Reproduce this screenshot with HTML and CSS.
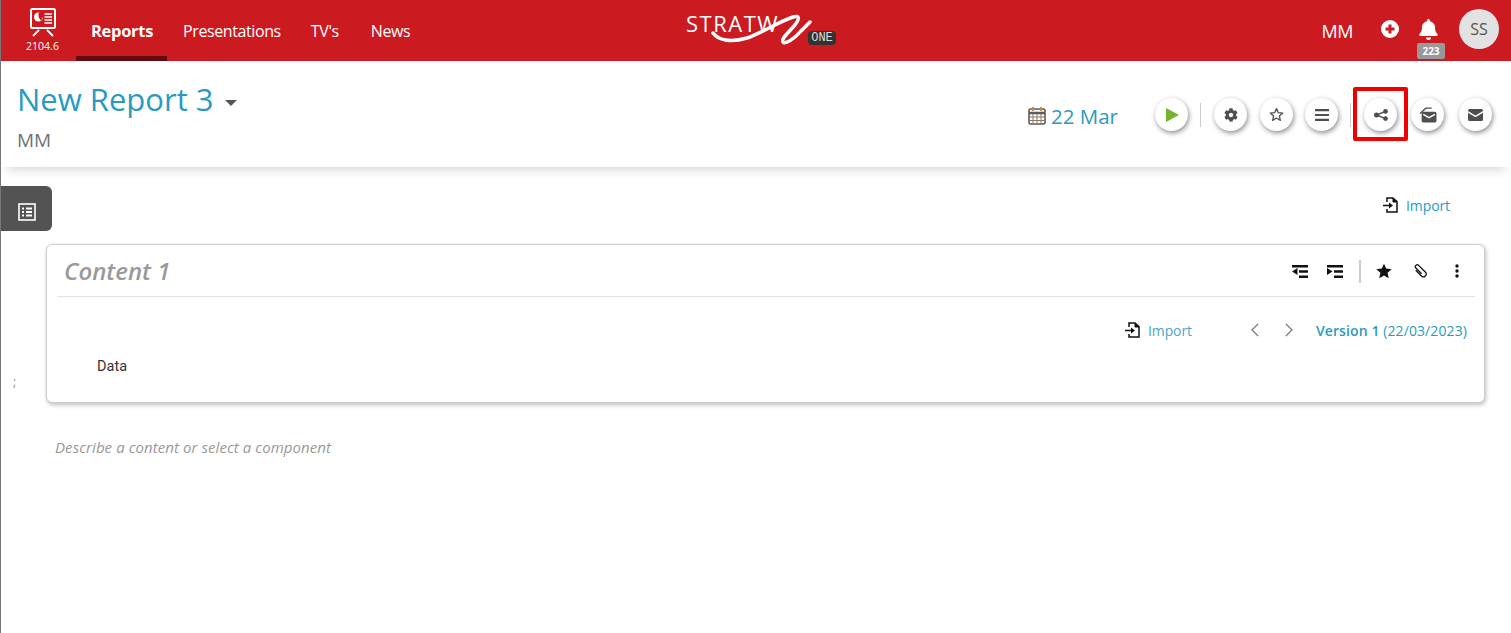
FILE: index.html
```html
<!DOCTYPE html>
<html lang="en">
<head>
    <meta charset="UTF-8">
    <meta name="viewport" content="width=device-width, initial-scale=1.0">
    <title>New Report 3</title>
    <link rel="stylesheet" href="styles.css">
</head>
<body>
    <nav class="topbar">
        <div class="app-mark">
            <svg class="app-icon" viewBox="0 0 26 29" width="26" height="29">
                <rect x="1" y="1" width="24" height="19" rx="1.5" fill="none" stroke="#fff" stroke-width="2"/>
                <circle cx="8.5" cy="9" r="4.5" fill="#fff"/>
                <path d="M8.5 9V4.5H13V9ZM8.5 9H13L11 13Z" fill="#cb1a20"/>
                <path d="M14.5 6H22M14.500 9H22M14.500 12H22M14.500 15H22" stroke="#fff" stroke-width="1.600"/>
                <path d="M9 22L3 28M17 22L23 28" stroke="#fff" stroke-width="1.800" fill="none"/>
            </svg>
            <span class="app-version">2104.6</span>
        </div>
        <div class="nav-links">
            <a class="nav-link active" href="#">Reports</a>
            <a class="nav-link" href="#">Presentations</a>
            <a class="nav-link" href="#">TV's</a>
            <a class="nav-link" href="#">News</a>
        </div>
        <div class="brand">
            <span class="brand-name">STRATW</span>
            <svg class="brand-swoosh" viewBox="0 0 104 36" width="104" height="36">
                <path d="M3 21C8 28 20 31 37 26C50 22 70 9 83 5C90 3 90 7 84 14C78 21 71 27 73 30C75 33 85 26 90 20C94 16 97 13 100 10" fill="none" stroke="#fff" stroke-width="3.500" stroke-linecap="round"/>
            </svg>
            <span class="brand-badge">ONE</span>
        </div>
        <div class="topbar-right">
            <span class="user-code">MM</span>
            <svg class="plus-icon" viewBox="0 0 18 18" width="18" height="18">
                <circle cx="9" cy="9" r="9" fill="#fff"/>
                <path d="M9 4.500V13.500M4.500 9H13.500" stroke="#cb1a20" stroke-width="3"/>
            </svg>
            <div class="bell-wrap">
                <svg viewBox="0 0 448 512" width="19" height="21">
                    <path fill="#fff" d="M224 512c35.32 0 63.97-28.65 63.97-64H160.03c0 35.35 28.65 64 63.97 64zm215.39-149.71c-19.32-20.76-55.47-51.99-55.47-154.29 0-77.7-54.48-139.9-127.94-155.16V32c0-17.67-14.32-32-31.98-32s-31.98 14.33-31.98 32v20.84C118.56 68.1 64.08 130.3 64.08 208c0 102.3-36.15 133.53-55.47 154.29-6 6.45-8.66 14.16-8.61 21.71.11 16.4 12.98 32 32.1 32h383.8c19.12 0 32-15.6 32.1-32 .05-7.55-2.61-15.27-8.61-21.71z"/>
                </svg>
                <span class="bell-count">223</span>
            </div>
            <div class="avatar">SS</div>
        </div>
    </nav>

    <header class="report-head">
        <div class="report-info">
            <h1 class="report-title">New Report 3 <span class="caret"></span></h1>
            <div class="report-owner">MM</div>
        </div>
        <div class="report-tools">
            <div class="report-date">
                <svg viewBox="0 0 18 19" width="18" height="19">
                    <rect x="1" y="3" width="16" height="15" rx="1.500" fill="#fff" stroke="#5f5a55" stroke-width="1.600"/>
                    <path d="M1 7H17" stroke="#5f5a55" stroke-width="2.500"/>
                    <path d="M5 8V17M9 8V17M13 8V17M2 11H16M2 14.500H16" stroke="#8a7660" stroke-width="1"/>
                    <path d="M5 1V5M13 1V5" stroke="#c98b4a" stroke-width="2"/>
                </svg>
                <span>22 Mar</span>
            </div>
            <button class="round-btn play-btn">
                <svg viewBox="0 0 13 14" width="13" height="14"><path d="M0 0L13 7L0 14Z" fill="#72b52c"/></svg>
            </button>
            <span class="tool-sep"></span>
            <button class="round-btn">
                <svg viewBox="0 0 512 512" width="14" height="14"><path fill="#4f4f4f" d="M487.4 315.7l-42.6-24.6c4.3-23.2 4.3-47 0-70.2l42.6-24.6c4.9-2.8 7.1-8.6 5.5-14-11.1-35.6-30-67.8-54.7-94.6-3.8-4.1-10-5.1-14.8-2.3L380.8 110c-17.9-15.400-38.500-27.300-60.800-35.100V25.800c0-5.600-3.900-10.500-9.400-11.700-36.700-8.200-74.300-7.800-109.200 0-5.500 1.200-9.400 6.100-9.400 11.700V75c-22.200 7.900-42.800 19.800-60.800 35.100L88.700 85.500c-4.900-2.800-11-1.900-14.800 2.300-24.700 26.700-43.600 58.900-54.700 94.600-1.700 5.400.6 11.200 5.500 14L67.300 221c-4.300 23.200-4.300 47 0 70.200l-42.600 24.600c-4.900 2.800-7.100 8.600-5.500 14 11.100 35.600 30 67.800 54.700 94.600 3.800 4.100 10 5.100 14.800 2.300l42.600-24.600c17.900 15.400 38.500 27.300 60.800 35.100v49.200c0 5.600 3.900 10.500 9.400 11.700 36.700 8.200 74.300 7.800 109.200 0 5.500-1.200 9.400-6.100 9.400-11.700v-49.200c22.200-7.900 42.800-19.800 60.800-35.100l42.600 24.600c4.900 2.800 11 1.900 14.800-2.300 24.700-26.700 43.600-58.900 54.700-94.600 1.500-5.500-.7-11.300-5.600-14.100zM256 336c-44.100 0-80-35.900-80-80s35.900-80 80-80 80 35.900 80 80-35.900 80-80 80z"/></svg>
            </button>
            <button class="round-btn">
                <svg viewBox="0 0 24 24" width="15" height="15"><path d="M12 2.500L14.900 9L22 9.700L16.600 14.400L18.200 21.400L12 17.700L5.800 21.400L7.400 14.400L2 9.700L9.100 9Z" fill="none" stroke="#4f4f4f" stroke-width="2" stroke-linejoin="round"/></svg>
            </button>
            <button class="round-btn tight">
                <svg viewBox="0 0 14 12" width="14" height="12"><path d="M0 1.200H14M0 6H14M0 10.800H14" stroke="#4f4f4f" stroke-width="2.200"/></svg>
            </button>
            <span class="tool-sep"></span>
            <button class="round-btn marked">
                <svg viewBox="0 0 14 12" width="14" height="12">
                    <circle cx="2.500" cy="6" r="2.500" fill="#4f4f4f"/><circle cx="11.500" cy="2.400" r="2.400" fill="#4f4f4f"/><circle cx="11.500" cy="9.600" r="2.400" fill="#4f4f4f"/>
                    <path d="M2.500 6L11.500 2.400M2.500 6L11.500 9.600" stroke="#4f4f4f" stroke-width="1.500"/>
                </svg>
            </button>
            <button class="round-btn wide">
                <svg viewBox="0 0 17 15" width="18" height="16">
                    <path d="M1 6L6.500 1H12" fill="none" stroke="#4f4f4f" stroke-width="1.300"/>
                    <rect x="2.500" y="4.500" width="14" height="10" rx="1.500" fill="#4f4f4f"/>
                    <path d="M4 7L9.500 10L15 7" fill="none" stroke="#fff" stroke-width="1.300"/>
                </svg>
            </button>
            <button class="round-btn wider">
                <svg viewBox="0 0 15 12" width="15" height="12">
                    <path fill="#4f4f4f" d="M1.500 0H13.500A1.500 1.500 0 0 1 15 1.500V2L7.500 6.500L0 2V1.500A1.500 1.500 0 0 1 1.500 0ZM0 3.800L7.500 8.300L15 3.800V10.500A1.500 1.500 0 0 1 13.500 12H1.500A1.500 1.500 0 0 1 0 10.500Z"/>
                </svg>
            </button>
        </div>
    </header>

    <div class="page-body">
        <aside class="side-col">
            <div class="side-tab">
                <svg viewBox="0 0 18 18" width="18" height="18">
                    <rect x="1" y="1" width="16" height="16" fill="none" stroke="#fff" stroke-width="1.600"/>
                    <path d="M4 5.500H6M8 5.500H14M4 9H6M8 9H14M4 12.500H6M8 12.500H14" stroke="#fff" stroke-width="1.800"/>
                </svg>
            </div>
            <span class="side-mark">;</span>
        </aside>
        <main class="main-col">
            <div class="import-row">
                <a class="import-link" href="#">
                    <svg viewBox="0 0 15 16" width="15" height="16">
                        <path d="M4 5V1H10L14 4.500V15H4V12" fill="none" stroke="#111" stroke-width="1.500"/>
                        <path d="M10 1V5H14" fill="#111" stroke="#111"/>
                        <path d="M0 8.500H7" stroke="#111" stroke-width="1.500"/>
                        <path d="M6 5.500L10 8.500L6 11.500Z" fill="#111"/>
                    </svg>
                    <span>Import</span>
                </a>
            </div>
            <section class="card">
                <div class="card-head">
                    <h2 class="card-title">Content 1</h2>
                    <div class="card-tools">
                        <svg class="tool-outdent" viewBox="0 0 16 13" width="16" height="13"><path d="M0 1.200H16M7 6.500H16M7 11.800H16" stroke="#111" stroke-width="2.400"/><path d="M5.500 3L0 6.500L5.500 10Z" fill="#111"/></svg>
                        <svg class="tool-indent" viewBox="0 0 16 13" width="16" height="13"><path d="M0 1.200H16M7 6.500H16M7 11.800H16" stroke="#111" stroke-width="2.400"/><path d="M0 3L5.500 6.500L0 10Z" fill="#111"/></svg>
                        <span class="card-sep"></span>
                        <svg class="tool-star" viewBox="0 0 24 24" width="16" height="16"><path d="M12 1L15.300 8.400L23.500 9.300L17.400 14.800L19.100 22.800L12 18.700L4.900 22.800L6.600 14.800L0.500 9.300L8.700 8.400Z" fill="#111"/></svg>
                        <svg class="tool-clip" viewBox="0 0 16 16" width="16" height="16"><path transform="rotate(-45 8 8)" d="M5.500 4.500V12.500a2.750 2.750 0 0 0 5.500 0V3a1.900 1.900 0 0 0-3.800 0V11" fill="none" stroke="#111" stroke-width="1.300"/></svg>
                        <svg class="tool-more" viewBox="0 0 4 14" width="4" height="14"><circle cx="2" cy="2" r="1.700" fill="#111"/><circle cx="2" cy="7" r="1.700" fill="#111"/><circle cx="2" cy="12" r="1.700" fill="#111"/></svg>
                    </div>
                </div>
                <div class="card-bar">
                    <a class="import-link muted" href="#">
                        <svg viewBox="0 0 15 16" width="15" height="16">
                            <path d="M4 5V1H10L14 4.500V15H4V12" fill="none" stroke="#111" stroke-width="1.500"/>
                            <path d="M10 1V5H14" fill="#111" stroke="#111"/>
                            <path d="M0 8.500H7" stroke="#111" stroke-width="1.500"/>
                            <path d="M6 5.500L10 8.500L6 11.500Z" fill="#111"/>
                        </svg>
                        <span>Import</span>
                    </a>
                    <svg class="pager-prev" viewBox="0 0 9 14" width="9" height="14"><path d="M8 1L2 7L8 13" fill="none" stroke="#777" stroke-width="1.200"/></svg>
                    <svg class="pager-next" viewBox="0 0 9 14" width="9" height="14"><path d="M1 1L7 7L1 13" fill="none" stroke="#777" stroke-width="1.200"/></svg>
                    <span class="version"><b>Version 1</b> (22/03/2023)</span>
                </div>
                <div class="card-data">Data</div>
            </section>
            <p class="placeholder">Describe a content or select a component</p>
        </main>
    </div>
</body>
</html>
```

FILE: styles.css
```css
html, body {
    height: 100%;
}
body {
    margin: 0;
    font-family: "Open Sans", "Noto Sans", Arial, sans-serif;
    background-color: #fff;
    border-left: 1px solid #777;
    box-sizing: border-box;
    overflow: hidden;
}
a {
    text-decoration: none;
}
svg {
    display: block;
    flex-shrink: 0;
}

/* top bar */
.topbar {
    position: relative;
    display: flex;
    align-items: stretch;
    height: 61px;
    background-color: #cb1a20;
    color: #fff;
}
.app-mark {
    width: 75px;
    display: flex;
    flex-direction: column;
    align-items: center;
    padding: 8px 0 0 8px;
    box-sizing: border-box;
}
.app-version {
    font-size: 10.500px;
    line-height: 14px;
    margin-top: 2px;
}
.nav-links {
    display: flex;
}
.nav-link {
    color: #fff;
    font-size: 16px;
    line-height: 62px;
    height: 56px;
    padding: 0 15px;
    letter-spacing: -0.4px;
}
.nav-link.active {
    font-size: 16.500px;
    font-weight: 700;
    letter-spacing: -0.3px;
    padding-right: 14px;
    border-bottom: 5px solid #650a0d;
}
.nav-link.active + .nav-link {
    padding-left: 16px;
}
.nav-link:last-child {
    margin-left: 2px;
}
.brand {
    position: absolute;
    left: 684px;
    top: 0;
    width: 155px;
    height: 61px;
}
.brand-name {
    position: absolute;
    left: 1px;
    top: 10px;
    font-size: 22px;
    line-height: 26px;
    letter-spacing: 1.500px;
    font-weight: 400;
}
.brand-swoosh {
    position: absolute;
    left: 25px;
    top: 12px;
}
.brand-badge {
    position: absolute;
    left: 123px;
    top: 31px;
    width: 28px;
    height: 14px;
    background-color: #333;
    border-radius: 4px;
    font-family: "Liberation Mono", monospace;
    font-size: 12px;
    line-height: 14px;
    text-align: center;
    color: #ddd;
}
.topbar-right {
    margin-left: auto;
    display: flex;
    align-items: center;
    padding: 0 12px 3px 0;
}
.user-code {
    font-size: 18px;
    letter-spacing: -0.5px;
    margin: 4px 28px 0 0;
}
.bell-wrap {
    position: relative;
    margin: 0 21px 0 20px;
}
.bell-count {
    position: absolute;
    top: 24px;
    left: -2px;
    width: 28px;
    height: 16px;
    background-color: #999;
    border-radius: 2px;
    font-size: 10px;
    font-weight: 700;
    line-height: 16px;
    text-align: center;
}
.avatar {
    width: 40px;
    height: 40px;
    border-radius: 50%;
    background-color: #e2e2e2;
    color: #555;
    font-size: 16px;
    line-height: 40px;
    text-align: center;
}

/* report header */
.report-head {
    display: flex;
    justify-content: space-between;
    height: 106px;
    padding: 0 19px 0 16px;
    box-shadow: 0 8px 10px -6px rgba(0,0,0,0.18);
}
.report-title {
    margin: 16px 0 0;
    font-size: 31px;
    line-height: 44px;
    font-weight: 400;
    color: #2a9ac1;
}
.caret {
    display: inline-block;
    margin-left: 3px;
    vertical-align: 5px;
    border-top: 6px solid #555;
    border-left: 6px solid transparent;
    border-right: 6px solid transparent;
}
.report-owner {
    font-size: 19px;
    line-height: 24px;
    color: #6d7278;
    margin-top: 7px;
}
.report-tools {
    display: flex;
    align-items: center;
    padding-top: 1px;
    height: 105px;
}
.report-date {
    display: flex;
    align-items: center;
    gap: 5px;
    font-size: 20.500px;
    color: #2a9ac1;
    margin: 2px 24px 0 0;
}
.round-btn {
    position: relative;
    width: 33px;
    height: 33px;
    margin-left: 13px;
    padding: 0;
    border: none;
    border-radius: 50%;
    background-color: #fff;
    box-shadow: 1px 2px 5px rgba(0,0,0,0.45);
    display: flex;
    align-items: center;
    justify-content: center;
}
.round-btn.tight {
    margin-left: 12px;
}
.round-btn.wide {
    margin-left: 14px;
}
.round-btn.wider {
    margin-left: 15px;
}
.play-btn svg {
    margin-left: 2px;
}
.tool-sep {
    width: 1px;
    height: 24px;
    background-color: #ccc;
    margin-left: 12px;
}
.round-btn.marked::after {
    content: "";
    position: absolute;
    left: -11px;
    top: -11px;
    width: 55px;
    height: 54px;
    box-sizing: border-box;
    border: 4px solid #f00000;
    border-radius: 2px;
}

/* page body */
.page-body {
    display: flex;
    height: 466px;
}
.side-col {
    width: 45px;
    flex-shrink: 0;
    padding-top: 19px;
}
.side-tab {
    width: 51px;
    height: 45px;
    padding-top: 6px;
    background-color: #535353;
    border-radius: 0 6px 6px 0;
    display: flex;
    align-items: center;
    justify-content: center;
    margin-bottom: 138px;
    box-sizing: border-box;
}
.side-mark {
    margin-left: 12px;
    font-size: 12px;
    color: #888;
}
.main-col {
    flex: 1;
    padding-right: 26px;
    min-width: 0;
}
.import-row {
    display: flex;
    justify-content: flex-end;
    height: 77px;
    padding-top: 29px;
    box-sizing: border-box;
    padding-right: 35px;
}
.import-link {
    display: flex;
    align-items: center;
    gap: 8px;
    height: 18px;
    font-size: 14px;
    color: #2a9ac1;
    letter-spacing: -0.1px;
}
.import-link.muted {
    color: #4fa3c6;
}
.card {
    height: 159px;
    box-sizing: border-box;
    border: 1px solid #ccc;
    border-radius: 6px;
    box-shadow: 1px 2px 4px rgba(0,0,0,0.25);
    padding: 0 9px 0 10px;
    background-color: #fff;
}
.card-head {
    display: flex;
    justify-content: space-between;
    align-items: center;
    height: 51px;
    border-bottom: 1px solid #e2e2e2;
    padding-left: 7px;
}
.card-title {
    margin: 0;
    font-size: 24px;
    font-style: italic;
    font-weight: 600;
    color: #9a9a9a;
}
.card-tools {
    display: flex;
    align-items: center;
    padding: 1px 16px 0 0;
}
.card-tools .card-sep {
    width: 2px;
    height: 23px;
    background-color: #ccc;
    margin-left: 16px;
}
.tool-indent {
    margin-left: 19px;
}
.tool-star {
    margin-left: 15px;
}
.tool-clip {
    margin-left: 20px;
}
.tool-more {
    margin-left: 27px;
}
.card-bar {
    display: flex;
    align-items: center;
    height: 18px;
    margin-top: 24px;
    padding-right: 8px;
    justify-content: flex-end;
}
.pager-prev {
    margin-left: 58px;
}
.pager-next {
    margin-left: 26px;
}
.version {
    margin-left: 22px;
    font-size: 14px;
    letter-spacing: 0.1px;
    color: #2a9ac1;
}
.version b {
    font-weight: 600;
}
.card-data {
    margin-top: 19px;
    margin-left: 40px;
    font-family: Roboto, Arial, sans-serif;
    font-size: 14.500px;
    line-height: 18px;
    color: #333;
}
.placeholder {
    margin: 35px 0 0 9px;
    font-size: 15px;
    line-height: 18px;
    font-style: italic;
    letter-spacing: 0.07px;
    color: #999;
}
```
